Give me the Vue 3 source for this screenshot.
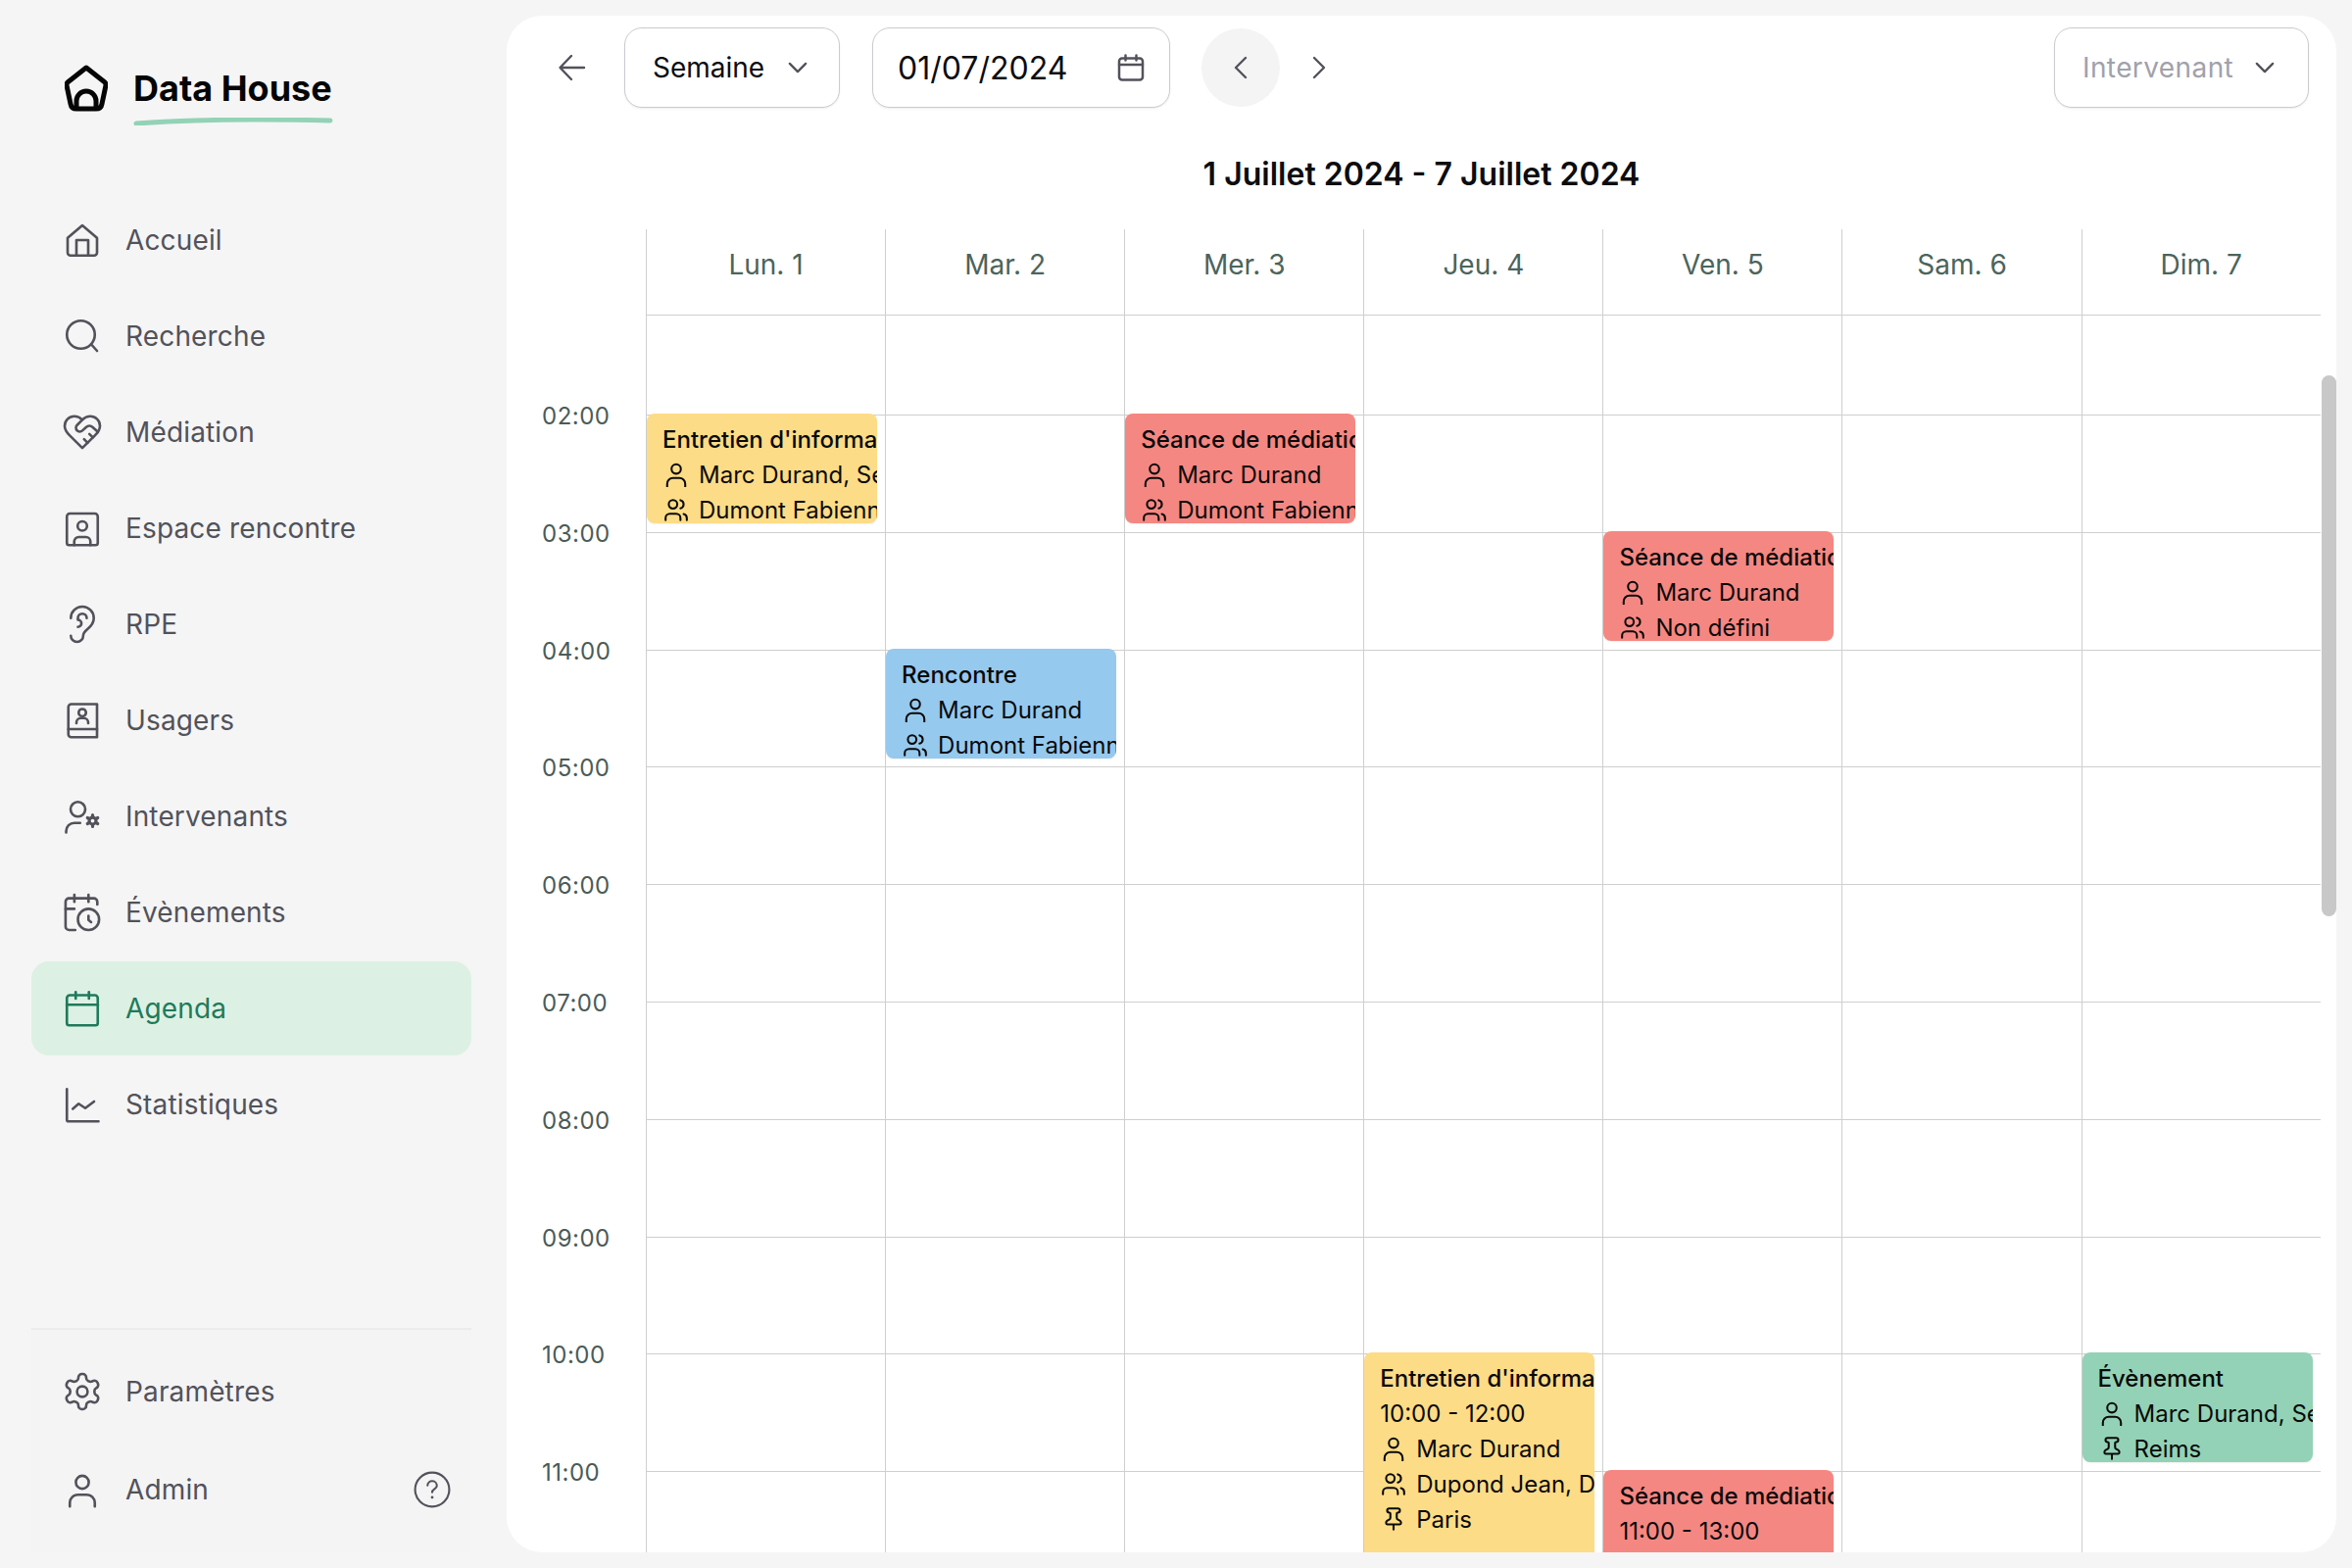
<template>
  <div class="app">
    <aside class="sidebar">
      <div class="brand">
        <svg class="brand-icon" viewBox="0 0 44 48" fill="none" stroke="#050505" stroke-width="5" stroke-linejoin="round">
          <path d="M22 3 41 18c1 1 1 2 1 3l-4 19c-.5 3-2.500 5-6 5H12c-3.500 0-5.500-2-6-5L2 21c0-1 0-2 1-3z" />
          <path d="M12 44v-7a10 10 0 0 1 20 0v7" />
        </svg>
        <div class="brand-name">
          <span>Data House</span>
          <svg class="brand-line" viewBox="0 0 204 8" fill="none">
            <path d="M3 6C60 2 140 1.500 201 3" stroke="#93d2b6" stroke-width="5" stroke-linecap="round" />
          </svg>
        </div>
      </div>

      <nav class="nav">
        <a v-for="item in navItems" :key="item.label" class="nav-item" :class="{ active: item.active }">
          <svg class="nav-icon" :viewBox="item.box || '0 0 24 24'" fill="none" stroke="currentColor" :stroke-width="item.sw || 1.750" stroke-linecap="round" stroke-linejoin="round">
            <path v-for="d in item.paths" :key="d" :d="d" />
            <circle v-for="c in item.circles || []" :key="c[0]" :cx="c[0]" :cy="c[1]" :r="c[2]" />
            <g v-if="item.gear" stroke-width="2.100">
              <circle cx="19" cy="15" r="2.300" />
              <path d="M19 11v1M19 18v1M15.500 13l.9.5M21.600 16.500l.9.5M15.500 17l.9-.5M21.600 13.500l.9-.5" />
            </g>
          </svg>
          <span>{{ item.label }}</span>
        </a>
      </nav>

      <div class="side-bottom">
        <a class="nav-item">
          <svg class="nav-icon" viewBox="2 2 20 20" fill="none" stroke="currentColor" stroke-width="1.450" stroke-linecap="round" stroke-linejoin="round">
            <path d="M12.220 2h-.44a2 2 0 0 0-2 2v.18a2 2 0 0 1-1 1.730l-.43.25a2 2 0 0 1-2 0l-.15-.08a2 2 0 0 0-2.730.73l-.22.38a2 2 0 0 0 .73 2.730l.15.1a2 2 0 0 1 1 1.720v.51a2 2 0 0 1-1 1.740l-.15.09a2 2 0 0 0-.73 2.730l.22.38a2 2 0 0 0 2.730.73l.15-.08a2 2 0 0 1 2 0l.43.25a2 2 0 0 1 1 1.730V20a2 2 0 0 0 2 2h.44a2 2 0 0 0 2-2v-.18a2 2 0 0 1 1-1.730l.43-.25a2 2 0 0 1 2 0l.15.08a2 2 0 0 0 2.730-.73l.22-.39a2 2 0 0 0-.73-2.730l-.15-.08a2 2 0 0 1-1-1.740v-.5a2 2 0 0 1 1-1.740l.15-.09a2 2 0 0 0 .73-2.730l-.22-.38a2 2 0 0 0-2.730-.73l-.15.08a2 2 0 0 1-2 0l-.43-.25a2 2 0 0 1-1-1.730V4a2 2 0 0 0-2-2z" />
            <circle cx="12" cy="12" r="3" />
          </svg>
          <span>Paramètres</span>
        </a>
        <a class="nav-item admin">
          <svg class="nav-icon" viewBox="0 0 24 24" fill="none" stroke="currentColor" stroke-width="1.750" stroke-linecap="round">
            <path :d="userShoulders" />
            <circle cx="12" cy="7" r="4.400" />
          </svg>
          <span>Admin</span>
          <svg class="help" viewBox="0 0 36 36" fill="none" stroke="currentColor" stroke-width="2" stroke-linecap="round">
            <circle cx="18" cy="18" r="16.500" />
            <path d="M13.500 14a4.500 4.500 0 0 1 9 .5c0 2.800-4.500 3.200-4.500 6" />
            <path d="M18 25.500h.02" stroke-width="2.600" />
          </svg>
        </a>
      </div>
    </aside>

    <main class="card">
      <div class="toolbar">
        <svg class="back" viewBox="0 0 36 36" fill="none" stroke="#52525b" stroke-width="2.400" stroke-linecap="round" stroke-linejoin="round">
          <path d="M30 18H6M17 6 5.500 18 17 30" />
        </svg>
        <div class="select view-select">
          <span>Semaine</span>
          <svg class="chevron" viewBox="0 0 24 24" fill="none" stroke="#52525b" stroke-width="2" stroke-linecap="round" stroke-linejoin="round"><path d="m5 8.500 7 7 7-7" /></svg>
        </div>
        <div class="select date-select">
          <span>01/07/2024</span>
          <svg class="date-icon" viewBox="0 0 28 28" fill="none" stroke="#52525b" stroke-width="2.500" stroke-linecap="round" stroke-linejoin="round">
            <rect x="2" y="4.500" width="24" height="22" rx="3" />
            <path d="M2 11h24M8.500 1.500v5M19.500 1.500v5" />
          </svg>
        </div>
        <button class="nav-round current">
          <svg viewBox="0 0 16 24" fill="none" stroke="#52525b" stroke-width="2.400" stroke-linecap="round" stroke-linejoin="round"><path d="M13 2 3 12l10 10" /></svg>
        </button>
        <button class="nav-round">
          <svg viewBox="0 0 16 24" fill="none" stroke="#52525b" stroke-width="2.400" stroke-linecap="round" stroke-linejoin="round"><path d="m3 2 10 10L3 22" /></svg>
        </button>
        <div class="select staff-select">
          <span>Intervenant</span>
          <svg class="chevron" viewBox="0 0 24 24" fill="none" stroke="#52525b" stroke-width="2" stroke-linecap="round" stroke-linejoin="round"><path d="m5 8.500 7 7 7-7" /></svg>
        </div>
      </div>

      <h1 class="week-title">1 Juillet 2024 - 7 Juillet 2024</h1>

      <div class="calendar">
        <div class="cal-head">
          <div></div>
          <div v-for="d in days" :key="d" class="day-name">{{ d }}</div>
        </div>
        <div class="cal-body">
          <div class="gutter">
            <div v-for="h in hours" :key="h" class="hour-label">{{ h }}</div>
          </div>
          <div v-for="(d, i) in days" :key="d" class="day-col">
            <div v-for="h in hours" :key="h" class="slot"></div>
            <div
              v-for="ev in eventsFor(i)"
              :key="ev.title + ev.start"
              class="event"
              :style="{ top: eventTop(ev) + 'px', height: eventHeight(ev) + 'px', background: colors[ev.kind] }"
            >
              <div class="ev-title">{{ ev.title }}</div>
              <div v-if="ev.time" class="ev-row">{{ ev.time }}</div>
              <div v-for="row in ev.rows" :key="row[1]" class="ev-row">
                <svg class="ev-icon" viewBox="0 0 24 24" fill="none" stroke="currentColor" stroke-width="1.900" stroke-linecap="round" stroke-linejoin="round">
                  <template v-if="row[0] === 'user'">
                    <path :d="userShoulders" />
                    <circle cx="12" cy="7" r="4.400" />
                  </template>
                  <template v-else-if="row[0] === 'group'">
                    <path d="M16 3.130a4 4 0 0 1 0 7.740M22 22v-2a4 4 0 0 0-3-3.870M16 22v-2a4 4 0 0 0-4-4H6a4 4 0 0 0-4 4v2" />
                    <circle cx="9" cy="7" r="4" />
                  </template>
                  <path v-else d="M12 17v5M9 10.760a2 2 0 0 1-1.110 1.790l-1.780.9A2 2 0 0 0 5 15.240V16a1 1 0 0 0 1 1h12a1 1 0 0 0 1-1v-.76a2 2 0 0 0-1.110-1.790l-1.780-.9A2 2 0 0 1 15 10.760V7a1 1 0 0 1 1-1 2 2 0 0 0 0-4H8a2 2 0 0 0 0 4 1 1 0 0 1 1 1z" />
                </svg>
                <span>{{ row[1] }}</span>
              </div>
            </div>
          </div>
        </div>
      </div>
      <div class="scrollbar"></div>
    </main>
  </div>
</template>

<script setup>
const userShoulders = 'M3.500 23.500V21a5.500 5.500 0 0 1 5.500-5.500h6a5.500 5.500 0 0 1 5.500 5.500v2.500'

const navItems = [
  { label: 'Accueil', paths: ['M2 10.500 12 2l10 8.500V20.500a2 2 0 0 1-2 2H4a2 2 0 0 1-2-2z', 'M8 22.500V12h8v10.500'] },
  { label: 'Recherche', paths: ['m18 17.500 4 4.500'], circles: [[11, 11, 9.500]] },
  {
    label: 'Médiation',
    box: '2 3 20 18',
    sw: 1.450,
    paths: [
      'M19 14c1.490-1.460 3-3.210 3-5.500A5.500 5.500 0 0 0 16.500 3c-1.760 0-3 .5-4.500 2-1.500-1.500-2.740-2-4.500-2A5.500 5.500 0 0 0 2 8.500c0 2.300 1.500 4.050 3 5.500l7 7Z',
      'M12 5 9.040 7.960a2.170 2.170 0 0 0 0 3.080c.82.82 2.130.85 3 .07l2.070-1.900a2.820 2.820 0 0 1 3.790 0l2.960 2.660',
      'm18 15-2-2',
      'm15 18-2-2',
    ],
  },
  {
    label: 'Espace rencontre',
    paths: ['M3.500 2h17a2 2 0 0 1 2 2v18a1.500 1.500 0 0 1-1.500 1.500H3a1.500 1.500 0 0 1-1.500-1.500V4a2 2 0 0 1 2-2z', 'M6.500 23.500V21a3 3 0 0 1 3-3h5a3 3 0 0 1 3 3v2.500'],
    circles: [[12, 10.500, 3.200]],
  },
  {
    label: 'RPE',
    box: '2.500 2 20 20',
    sw: 1.450,
    paths: ['M6 8.500a6.500 6.500 0 1 1 13 0c0 6-6 6-6 10a3.500 3.500 0 1 1-7 0', 'M15 8.500a2.500 2.500 0 0 0-5 0v1a2 2 0 1 1 0 4'],
  },
  {
    label: 'Usagers',
    paths: ['M22 1H4.500A2 2 0 0 0 2.500 3v18.500a2 2 0 0 0 2 2H22z', 'M2.500 18H22', 'M8 14v-.5a3 3 0 0 1 3-3h2a3 3 0 0 1 3 3v.5'],
    circles: [[12, 6.800, 2.500]],
  },
  {
    label: 'Intervenants',
    gear: true,
    paths: ['M1 23v-1a5.500 5.500 0 0 1 5.500-5.500h4'],
    circles: [[9, 7.200, 5]],
  },
  {
    label: 'Évènements',
    box: '2.500 2 20 20',
    sw: 1.450,
    paths: ['M21 7.500V6a2 2 0 0 0-2-2H5a2 2 0 0 0-2 2v14a2 2 0 0 0 2 2h3.500', 'M16 2v4', 'M8 2v4', 'M3 10h5', 'M17.500 17.500 16 16.300V14'],
    circles: [[16, 16, 6]],
  },
  {
    label: 'Agenda',
    active: true,
    paths: ['M3.500 3h17a2 2 0 0 1 2 2v17a1.500 1.500 0 0 1-1.500 1.500H3A1.500 1.500 0 0 1 1.500 22V5a2 2 0 0 1 2-2z', 'M1.500 9.500h21', 'M7.500 .8v4.500', 'M16.500 .8v4.500'],
  },
  { label: 'Statistiques', paths: ['M1.500 1.500V22.500a1 1 0 0 0 1 1H23', 'M5.500 15l4-3.500 4.500 3L20 10'] },
]

const days = ['Lun. 1', 'Mar. 2', 'Mer. 3', 'Jeu. 4', 'Ven. 5', 'Sam. 6', 'Dim. 7']
const hours = ['02:00', '03:00', '04:00', '05:00', '06:00', '07:00', '08:00', '09:00', '10:00', '11:00']
const colors = { info: '#fddc87', med: '#f58782', meet: '#96c9ee', event: '#93d2b6' }

const events = [
  { day: 0, start: 2, len: 1, kind: 'info', title: "Entretien d'information", rows: [['user', 'Marc Durand, Sé'], ['group', 'Dumont Fabienne']] },
  { day: 2, start: 2, len: 1, kind: 'med', title: 'Séance de médiation', rows: [['user', 'Marc Durand'], ['group', 'Dumont Fabienne']] },
  { day: 4, start: 3, len: 1, kind: 'med', title: 'Séance de médiation', rows: [['user', 'Marc Durand'], ['group', 'Non défini']] },
  { day: 1, start: 4, len: 1, kind: 'meet', title: 'Rencontre', rows: [['user', 'Marc Durand'], ['group', 'Dumont Fabienne']] },
  { day: 3, start: 10, len: 2, kind: 'info', title: "Entretien d'information", time: '10:00 - 12:00', rows: [['user', 'Marc Durand'], ['group', 'Dupond Jean, D'], ['pin', 'Paris']] },
  { day: 4, start: 11, len: 2, kind: 'med', title: 'Séance de médiation', time: '11:00 - 13:00', rows: [['user', 'Marc Durand']] },
  { day: 6, start: 10, len: 1, kind: 'event', title: 'Évènement', rows: [['user', 'Marc Durand, Sé'], ['pin', 'Reims']] },
]

const eventsFor = (day) => events.filter((e) => e.day === day)
const eventTop = (ev) => (ev.start - 2) * 119.800
const eventHeight = (ev) => ev.len * 120 - 8
</script>

<style>
html,
body {
  margin: 0;
  background: #f5f5f5;
  overflow: hidden;
}
</style>

<style scoped>
.app {
  display: flex;
  width: 2400px;
  height: 1600px;
  background: #f5f5f5;
  font-family: Inter, "Noto Sans", sans-serif;
  color: #52525b;
}

.sidebar {
  display: flex;
  flex-direction: column;
  width: 517px;
  height: 1584px;
  flex-shrink: 0;
  box-sizing: border-box;
  padding: 0 36px 0 32px;
}

.brand {
  display: flex;
  align-items: flex-start;
  gap: 26px;
  height: 197px;
  padding: 66px 0 0 34px;
  box-sizing: border-box;
}

.brand-icon {
  width: 44px;
  height: 48px;
  flex-shrink: 0;
}

.brand-name {
  display: flex;
  flex-direction: column;
  padding-top: 2px;
  font-size: 36px;
  font-weight: 700;
  line-height: 44px;
  color: #050505;
  white-space: nowrap;
}

.brand-line {
  width: 204px;
  height: 8px;
  margin-top: 8px;
}

.nav {
  display: flex;
  flex-direction: column;
  gap: 2px;
}

.nav-item {
  display: flex;
  align-items: center;
  gap: 26px;
  height: 96px;
  padding-left: 34px;
  border-radius: 18px;
  font-size: 28px;
  letter-spacing: 0.15px;
  color: #52525b;
}

.nav-item.active {
  background: #dcf1e4;
  color: #1f7a5c;
}

.nav-icon {
  width: 36px;
  height: 36px;
  flex-shrink: 0;
  overflow: visible;
}

.side-bottom {
  margin-top: auto;
  height: 229px;
  box-sizing: border-box;
  border-top: 2px solid #ebebeb;
  background: #f4f4f4;
  padding-top: 15px;
  display: flex;
  flex-direction: column;
  gap: 4px;
}

.admin {
  position: relative;
}

.help {
  width: 38px;
  height: 38px;
  margin-left: auto;
  margin-right: 21px;
}

.card {
  position: relative;
  display: flex;
  flex-direction: column;
  flex: 1;
  height: 1568px;
  margin: 16px 16px 16px 0;
  background: #fff;
  border-radius: 36px;
  overflow: hidden;
}

.toolbar {
  display: flex;
  align-items: center;
  height: 82px;
  margin-top: 12px;
  padding: 0 28px 0 49px;
  flex-shrink: 0;
}

.back {
  width: 36px;
  height: 36px;
  margin-right: 35px;
}

.select {
  display: flex;
  align-items: center;
  justify-content: space-between;
  box-sizing: border-box;
  height: 82px;
  border: 1px solid #cbcbd0;
  border-radius: 18px;
  background: #fff;
  box-shadow: 0 1px 2px rgba(16, 24, 40, 0.08);
  font-size: 28px;
  color: #0c0c0f;
}

.view-select {
  width: 220px;
  padding: 0 28px 0 28px;
  margin-right: 33px;
}

.date-select {
  width: 304px;
  padding: 0 25px 0 25px;
  margin-right: 32px;
  font-size: 32px;
}

.date-icon {
  width: 28px;
  height: 28px;
}

.staff-select {
  width: 260px;
  margin-left: auto;
  padding: 0 30px 0 28px;
  color: #a1a1aa;
  letter-spacing: 0.4px;
}

.chevron {
  width: 28px;
  height: 28px;
}

.nav-round {
  width: 80px;
  height: 80px;
  padding: 0;
  border: none;
  border-radius: 50%;
  background: none;
  display: flex;
  align-items: center;
  justify-content: center;
}

.nav-round svg {
  width: 16px;
  height: 24px;
}

.nav-round.current {
  background: #f4f4f5;
}

.week-title {
  margin: 43px 0 0;
  height: 50px;
  text-align: center;
  font-size: 32px;
  line-height: 50px;
  font-weight: 600;
  color: #0c0c0f;
  flex-shrink: 0;
}

.calendar {
  display: flex;
  flex-direction: column;
  flex: 1;
  min-height: 0;
  margin-top: 31px;
}

.cal-head,
.cal-body {
  display: grid;
  grid-template-columns: 142px repeat(7, 244.100px);
}

.day-name {
  height: 88px;
  box-sizing: border-box;
  display: flex;
  align-items: center;
  justify-content: center;
  border-left: 1px solid #cfcfcf;
  border-bottom: 1px solid #cfcfcf;
  font-size: 28px;
  color: #4b645c;
  padding-bottom: 16px;
}

.cal-body {
  flex: 1;
  min-height: 0;
  overflow: hidden;
}

.gutter {
  padding-top: 88px;
}

.hour-label {
  height: 119.800px;
  line-height: 30px;
  padding-left: 36px;
  font-size: 24px;
  letter-spacing: 0.5px;
  color: #4b5b57;
}

.day-col {
  position: relative;
  padding-top: 101px;
  border-left: 1px solid #cfcfcf;
}

.slot {
  box-sizing: border-box;
  height: 119.800px;
  border-top: 1px solid #cfcfcf;
}

.event {
  position: absolute;
  left: 0;
  width: 235px;
  margin-top: 100px;
  box-sizing: border-box;
  padding: 9px 0 0 16px;
  border-radius: 8px;
  overflow: hidden;
  box-shadow: 0 1px 2px rgba(0, 0, 0, 0.06);
  color: #0a0a0a;
  font-size: 24px;
  line-height: 36px;
  white-space: nowrap;
}

.ev-title {
  font-weight: 500;
}

.ev-row {
  display: flex;
  align-items: center;
  gap: 9px;
}

.ev-icon {
  width: 26px;
  height: 26px;
  margin: -2px 1px 0;
  flex-shrink: 0;
}

.scrollbar {
  position: absolute;
  right: 0;
  top: 367px;
  width: 15px;
  height: 552px;
  border-radius: 8px;
  background: #c8c8c8;
}
</style>
